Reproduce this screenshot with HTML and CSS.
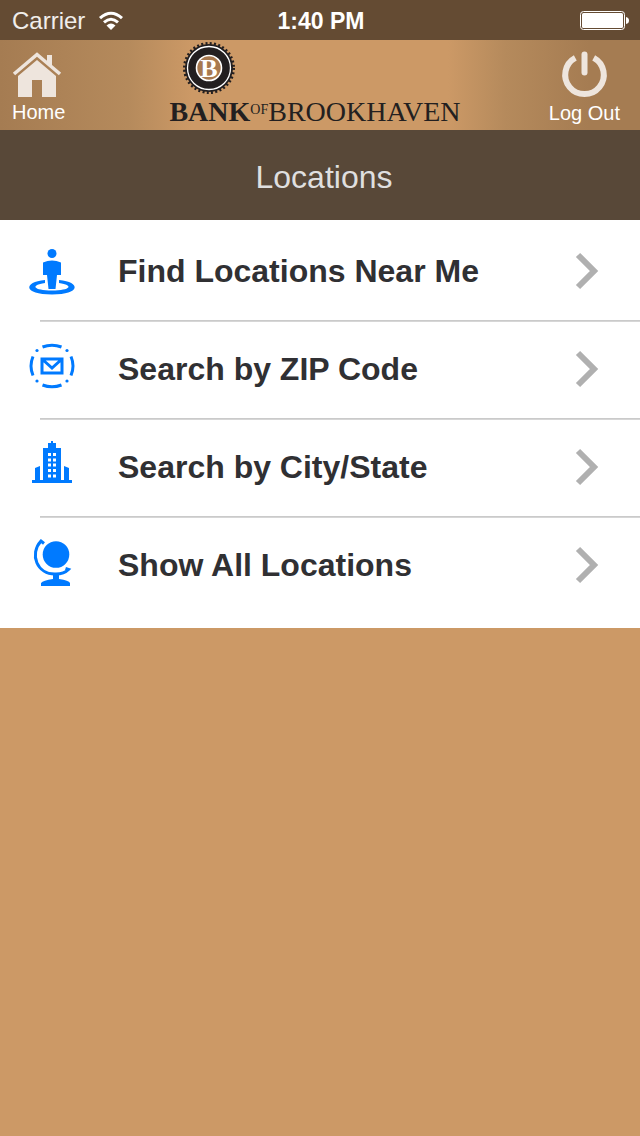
FILE: index.html
```html
<!DOCTYPE html>
<html lang="en">
<head>
    <meta charset="UTF-8">
    <meta name="viewport" content="width=device-width, initial-scale=1.0">
    <title>Locations</title>
    <link rel="stylesheet" href="styles.css">
</head>
<body>
    <div class="status-bar">
        <div class="carrier">
            <span>Carrier</span>
            <svg class="wifi" width="24" height="18" viewBox="0 0 24 18" aria-hidden="true">
                <path d="M1 6.200Q12-3.800 23 6.200M5 10.400Q12 4.200 19 10.400" fill="none" stroke="#fff" stroke-width="3"/>
                <path d="M7.500 13.600Q12 9.500 16.500 13.600L12 18Z" fill="#fff"/>
            </svg>
        </div>
        <div class="time">1:40 PM</div>
        <svg class="battery" width="50" height="20" viewBox="0 0 50 20" aria-hidden="true">
            <rect x="0.500" y="0.500" width="44" height="18" rx="3" fill="none" stroke="#fff" stroke-width="1"/>
            <rect x="2" y="2" width="41" height="15" rx="1.500" fill="#fff"/>
            <path d="M46 6Q49 6.500 49 9.500T46 13Z" fill="#fff"/>
        </svg>
    </div>

    <header class="header">
        <a href="#" class="nav-link">
            <svg width="50" height="48" viewBox="0 0 50 48" aria-hidden="true">
                <path d="M2 23L25 3.500L48 23" fill="none" stroke="#eee5dd" stroke-width="3.600"/>
                <path d="M35 4h5v12l-5-4z" fill="#eee5dd"/>
                <path d="M25 9L44 25V46H30V29H20V46H6V25Z" fill="#eee5dd"/>
            </svg>
            <span>Home</span>
        </a>
        <div class="logo">
            <svg class="seal" width="52" height="52" viewBox="0 0 52 52" aria-hidden="true">
                <circle cx="26" cy="26" r="24" fill="#231f20"/>
                <circle cx="26" cy="26" r="24.500" fill="none" stroke="#231f20" stroke-width="3" stroke-dasharray="2 2.276"/>
                <circle cx="26" cy="26" r="21.500" fill="none" stroke="#fff" stroke-width="1.300"/>
                <circle cx="26" cy="26" r="12.500" fill="#a8794f" stroke="#fff" stroke-width="1.600"/>
                <text x="26" y="35" class="seal-letter">B</text>
            </svg>
            <div class="logo-text"><b>BANK</b><small>OF</small><span>BROOKHAVEN</span></div>
        </div>
        <a href="#" class="nav-link nav-right">
            <svg width="48" height="48" viewBox="1 1 48 48" aria-hidden="true">
                <path d="M16.300 7.800A19.300 19.300 0 1 0 34.700 7.800" fill="none" stroke="#eee5dd" stroke-width="6"/>
                <path d="M25.500 4.500V22.500" stroke="#eee5dd" stroke-width="6" stroke-linecap="round"/>
            </svg>
            <span>Log Out</span>
        </a>
    </header>

    <h1 class="title">Locations</h1>

    <ul class="menu">
        <li class="menu-item">
            <a href="#" class="menu-link">
                <svg class="icon" width="48" height="48" viewBox="0 0 48 48" aria-hidden="true">
                    <path fill-rule="evenodd" d="M17 33C-5 35-5 47.500 24 47.500S53 35 31 33V36C46 38 43 43.500 24 43.500S2 38 17 36Z"/>
                    <circle cx="24" cy="6.500" r="4.500"/>
                    <path d="M15 15.500Q24 11.500 33 15.500V28H29L27.500 42H20.500L19 28H15Z"/>
                </svg>
                <span class="label">Find Locations Near Me</span>
                <svg class="arrow" width="24" height="38" viewBox="0 0 24 38" aria-hidden="true"><path d="M2 3L18 19L2 35"/></svg>
            </a>
        </li>
        <li class="menu-item">
            <a href="#" class="menu-link">
                <svg class="icon" width="48" height="48" viewBox="0 2 48 48" aria-hidden="true">
                    <path class="line" d="M14.500 4Q24 0.500 33.500 4M14.500 42Q24 45.500 33.500 42M5 13.500Q1 23 5 32.500M43 13.500Q47 23 43 32.500"/>
                    <path class="line" d="M14 16H34V30H14ZM14 16L24 25L34 16"/>
                    <circle cx="9" cy="7.500" r="1.600"/>
                    <circle cx="39" cy="7.500" r="1.600"/>
                    <circle cx="9" cy="38" r="1.600"/>
                    <circle cx="39" cy="38" r="1.600"/>
                </svg>
                <span class="label">Search by ZIP Code</span>
                <svg class="arrow" width="24" height="38" viewBox="0 0 24 38" aria-hidden="true"><path d="M2 3L18 19L2 35"/></svg>
            </a>
        </li>
        <li class="menu-item">
            <a href="#" class="menu-link">
                <svg class="icon" width="48" height="48" viewBox="0 2 48 48" aria-hidden="true">
                    <path fill-rule="evenodd" d="M4 39H7V27L12 25V39H15V7H20V2H23V0H25V2H28V7H33V39H36V25L41 27V39H44V42H4ZM20 12V15H23V12ZM25 12V15H28V12ZM20 17.500V20.500H23V17.500ZM25 17.500V20.500H28V17.500ZM20 22.500V25.500H23V22.500ZM25 22.500V25.500H28V22.500ZM20 28V31H23V28ZM25 28V31H28V28ZM20 33.500V36.500H23V33.500ZM25 33.500V36.500H28V33.500Z"/>
                </svg>
                <span class="label">Search by City/State</span>
                <svg class="arrow" width="24" height="38" viewBox="0 0 24 38" aria-hidden="true"><path d="M2 3L18 19L2 35"/></svg>
            </a>
        </li>
        <li class="menu-item">
            <a href="#" class="menu-link">
                <svg class="icon" width="48" height="48" viewBox="0 0 48 48" aria-hidden="true">
                    <circle cx="28" cy="13.500" r="13.300"/>
                    <path class="line" d="M16 2.500L13 0C1 13 9 34 28 33Q36 33 40.500 28.500L37.500 27.500"/>
                    <path d="M25 33H31V38Q41 39.500 42 42V45H13V42Q15 39.500 25 38Z"/>
                </svg>
                <span class="label">Show All Locations</span>
                <svg class="arrow" width="24" height="38" viewBox="0 0 24 38" aria-hidden="true"><path d="M2 3L18 19L2 35"/></svg>
            </a>
        </li>
    </ul>
</body>
</html>
```
FILE: styles.css
```css
* {
    margin: 0;
    padding: 0;
    box-sizing: border-box;
}

body {
    font-family: "Liberation Sans", Arial, sans-serif;
    background: #cc9966;
    min-height: 100vh;
}

a {
    color: inherit;
    text-decoration: none;
}

svg {
    display: block;
    overflow: visible;
}

.status-bar {
    display: grid;
    grid-template-columns: 1fr auto 1fr;
    align-items: center;
    height: 40px;
    padding: 2px 10px 0 12px;
    background: #644b33;
    color: #fff;
    font-size: 24px;
}

.carrier {
    display: flex;
    align-items: center;
    gap: 14px;
    color: #f1eeeb;
}

.time {
    font-size: 23px;
    font-weight: bold;
}

.battery {
    justify-self: end;
}

.header {
    display: grid;
    grid-template-columns: 1fr auto 1fr;
    height: 90px;
    padding: 0 20px 0 12px;
    background: linear-gradient(to right, #a57c52 0%, #b58a5c 20%, #cc9966 30%, #cc9966 70%, #b58a5c 79%, #a57c52 92%);
}

.nav-link {
    display: flex;
    flex-direction: column;
    align-items: flex-start;
    justify-self: start;
    padding-top: 11px;
    color: #fff;
    font-size: 20px;
    line-height: 26px;
}

.nav-right {
    align-items: center;
    justify-self: end;
    line-height: 28px;
}

.logo {
    display: flex;
    flex-direction: column;
    justify-content: space-between;
    padding: 2px 2px 2px 0;
    color: #231f20;
    font-family: "Liberation Serif", "Times New Roman", serif;
}

.seal {
    margin-left: 14px;
}

.seal-letter {
    fill: #fff;
    font-size: 26px;
    font-weight: bold;
    text-anchor: middle;
}

.logo-text {
    display: flex;
    align-items: baseline;
    font-size: 28px;
    line-height: 32px;
}

.logo-text small {
    font-size: 14px;
    line-height: 28px;
    align-self: flex-start;
}

.title {
    background: #584838;
    color: #dfdfdf;
    font-size: 32px;
    font-weight: normal;
    line-height: 90px;
    padding: 2px 0 0 8px;
    height: 90px;
    text-align: center;
}

.menu {
    list-style: none;
    background: #fff;
    padding: 2px 0 14px;
}

.menu-link {
    display: flex;
    align-items: center;
    height: 98px;
    padding: 0 40px 0 28px;
}

.menu-item + .menu-item .menu-link {
    background: linear-gradient(#c4c4c4, #dcdcdc) 40px 0 / 100% 2px no-repeat;
}

.icon {
    width: 48px;
    fill: #007aff;
}

.icon .line {
    fill: none;
    stroke: #007aff;
    stroke-width: 3;
}

.label {
    flex: 1;
    margin-left: 42px;
    color: #303033;
    font-size: 32px;
    font-weight: bold;
}

.arrow {
    fill: none;
    stroke: #b0b0b0;
    stroke-width: 6;
}
```
